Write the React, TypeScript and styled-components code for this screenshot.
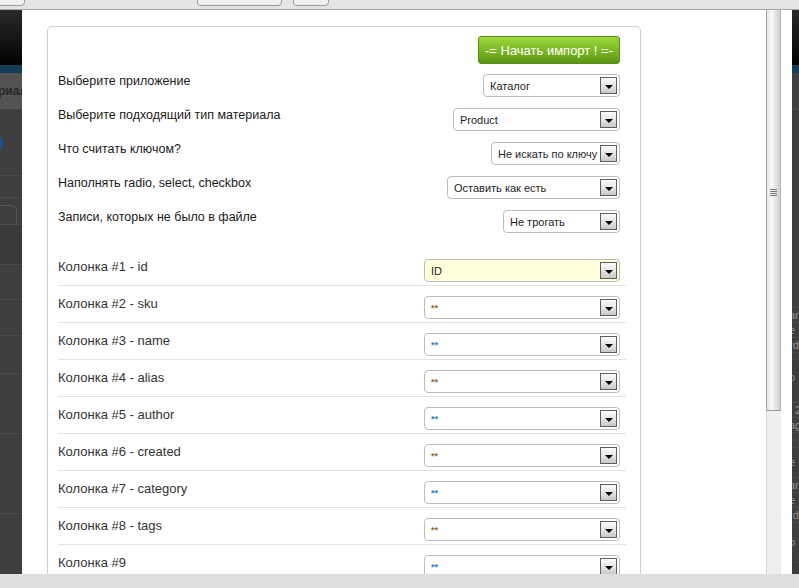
import React from 'react'
import styled, { createGlobalStyle } from 'styled-components'

const GlobalStyle = createGlobalStyle`
    html, body {
        margin: 0;
        padding: 0;
        overflow: hidden;
    }
    body {
        font-family: 'Liberation Sans', Arial, sans-serif;
    }
`

const Page = styled.div`
    width: 799px;
    height: 588px;
    display: flex;
    flex-direction: column;
    background: #dedede;
    overflow: hidden;
`

const TopBar = styled.div`
    height: 9px;
    flex: none;
    display: flex;
    align-items: flex-end;
    overflow: hidden;
    background: #e4e4e4;
    border-bottom: 1px solid #a9a9a9;
`

const TopButton = styled.div<{ $gap: number; $width: number }>`
    flex: none;
    margin-left: ${({ $gap }) => $gap}px;
    margin-bottom: 3px;
    width: ${({ $width }) => $width}px;
    height: 16px;
    box-sizing: border-box;
    border: 1px solid #9c9c9c;
    border-radius: 4px;
    background: linear-gradient(#fdfdfd, #ededed);
`

const Middle = styled.div`
    height: 564px;
    flex: none;
    display: flex;
`

const Backdrop = styled.div<{ $width?: number }>`
    width: ${({ $width }) => ($width ? `${$width}px` : 'auto')};
    flex: ${({ $width }) => ($width ? 'none' : '1')};
    display: flex;
    flex-direction: column;
    overflow: hidden;
    background: #3d3d3d;
`

const BackdropHeader = styled.div`
    height: 55px;
    flex: none;
    background: linear-gradient(#2a2a2a, #020202);
`

const BackdropStripe = styled.div`
    height: 8px;
    flex: none;
    background: #123c58;
`

const BackdropNav = styled.div`
    height: 36px;
    flex: none;
    display: flex;
    align-items: center;
    justify-content: flex-end;
    white-space: nowrap;
    background: #535353;
    border-bottom: 1px solid #464646;
    color: #262626;
    font-size: 12px;
    font-weight: bold;
`

const NavText = styled.span`
    margin-right: -5px;
`

const BackdropRow = styled.div<{ $height: number; $shade?: string }>`
    height: ${({ $height }) => $height}px;
    flex: none;
    display: flex;
    align-items: center;
    box-sizing: border-box;
    background: ${({ $shade }) => $shade || '#3e3e3e'};
    border-bottom: 1px solid #4b4b4b;
    color: #8f959a;
    font-size: 11px;
    white-space: nowrap;
`

const BlueDot = styled.span`
    width: 12px;
    height: 12px;
    margin-left: -8px;
    border-radius: 50%;
    background: #1d4f8c;
`

const Tab = styled.span`
    width: 16px;
    height: 26px;
    margin-top: 14px;
    border: 1px solid #555;
    border-left: none;
    border-bottom: none;
    border-radius: 0 6px 0 0;
`

const FragmentText = styled.span`
    margin-left: -3px;
    line-height: 15px;
`

const Modal = styled.div`
    width: 770px;
    flex: none;
    display: flex;
    background: #fff;
`

const ModalBody = styled.div`
    width: 744px;
    flex: none;
    overflow: hidden;
    box-sizing: border-box;
    padding: 16px 0 0 25px;
`

const Panel = styled.div`
    width: 594px;
    min-height: 700px;
    box-sizing: border-box;
    padding: 9px 14px 0 10px;
    border: 1px solid #cecece;
    border-radius: 5px 5px 0 0;
`

const ActionBar = styled.div`
    display: flex;
    justify-content: flex-end;
    padding-right: 6px;
    margin-bottom: 10px;
`

const StartButton = styled.button`
    width: 142px;
    height: 28px;
    box-sizing: border-box;
    padding: 0;
    border: 1px solid #5b8c17;
    border-radius: 3px;
    background: linear-gradient(#9fd93d, #79b622 55%, #5d9412);
    color: #fff;
    font-family: 'Liberation Sans', Arial, sans-serif;
    font-size: 13px;
    cursor: pointer;
`

const SettingRow = styled.div`
    height: 34px;
    display: flex;
    align-items: flex-start;
    padding-right: 6px;
`

const SettingLabel = styled.div`
    font-size: 12.5px;
    line-height: 15px;
    color: #1a1a1a;
`

const ColumnList = styled.div`
    margin-top: 5px;
`

const ColumnRow = styled.div`
    height: 37px;
    box-sizing: border-box;
    display: flex;
    align-items: flex-start;
    padding: 10px 6px 3px 0;
    border-bottom: 1px solid #e3e3e3;
`

const ColumnLabel = styled.div`
    font-size: 13px;
    line-height: 16px;
    color: #333;
`

const SelectBox = styled.div<{ $width: number; $highlight?: boolean }>`
    width: ${({ $width }) => $width}px;
    height: 23px;
    flex: none;
    margin-left: auto;
    box-sizing: border-box;
    display: flex;
    align-items: center;
    padding-left: 6px;
    border: 1px solid #bcbcbc;
    border-radius: 4px;
    background: ${({ $highlight }) => ($highlight ? '#ffffdc' : '#fff')};
    font-size: 11px;
    color: #1e1e1e;
    white-space: nowrap;
`

const SelectValue = styled.span<{ $tone?: string }>`
    color: ${({ $tone }) => $tone || '#1e1e1e'};
    font-weight: ${({ $tone }) => ($tone ? 'bold' : 'normal')};
    font-size: ${({ $tone }) => ($tone ? '9px' : '11px')};
`

const ArrowBox = styled.span`
    width: 17px;
    height: 17px;
    flex: none;
    margin-left: auto;
    margin-right: 2px;
    box-sizing: border-box;
    display: flex;
    align-items: center;
    justify-content: center;
    border: 1px solid #5e5e5e;
    background: linear-gradient(#fbfbfb, #e6e6e6 50%, #c9c9c9);
`

const ArrowTip = styled.span`
    margin-top: 2px;
    border-left: 4px solid transparent;
    border-right: 4px solid transparent;
    border-top: 4px solid #000;
`

const Scrollbar = styled.div`
    width: 15px;
    flex: none;
    display: flex;
    flex-direction: column;
`

const Thumb = styled.div`
    height: 401px;
    flex: none;
    box-sizing: border-box;
    display: flex;
    flex-direction: column;
    align-items: center;
    padding-top: 179px;
    border-left: 1px solid #a3a3a3;
    border-right: 1px solid #b7b7b7;
    border-bottom: 1px solid #9a9a9a;
    background: linear-gradient(to right, #e6e6e6, #f8f8f8 35%, #e2e2e2 70%, #cfcfcf);
`

const GripLine = styled.span`
    width: 7px;
    height: 1px;
    margin-bottom: 1px;
    background: #7a7a7a;
`

const Track = styled.div`
    flex: 1;
    background: #eeeeee;
    border-left: 1px solid #dadada;
`

const Gutter = styled.div`
    width: 11px;
    flex: none;
`

const BottomBar = styled.div`
    flex: 1;
    background: #dedede;
`

type SelectProps = {
    width: number
    value: string
    tone?: string
    highlight?: boolean
}

function FakeSelect({ width, value, tone, highlight }: SelectProps) {
    return (
        <SelectBox $width={width} $highlight={highlight}>
            <SelectValue $tone={tone}>{value}</SelectValue>
            <ArrowBox>
                <ArrowTip />
            </ArrowBox>
        </SelectBox>
    )
}

const settings = [
    { label: 'Выберите приложение', value: 'Каталог', width: 137 },
    { label: 'Выберите подходящий тип материала', value: 'Product', width: 167 },
    { label: 'Что считать ключом?', value: 'Не искать по ключу', width: 129 },
    { label: 'Наполнять radio, select, checkbox', value: 'Оставить как есть', width: 173 },
    { label: 'Записи, которых не было в файле', value: 'Не трогать', width: 117 },
]

const columns = ['id', 'sku', 'name', 'alias', 'author', 'created', 'category', 'tags', '']

const leftRows = [
    { height: 66, content: <BlueDot /> },
    { height: 22 },
    { height: 27, content: <Tab /> },
    { height: 40, shade: '#3a3a3a' },
    { height: 35 },
    { height: 36 },
    { height: 38 },
    { height: 60 },
    { height: 80 },
    { height: 80 },
]

const rightRows = [
    { height: 37, shade: '#404040' },
    { height: 198 },
    { height: 15, text: 'ar' },
    { height: 15, text: 'e' },
    { height: 15, text: 'rd' },
    { height: 50, text: 'o' },
    { height: 15, text: ': 2' },
    { height: 15, text: 'ag' },
    { height: 15, text: '|' },
    { height: 30, text: 'e 1' },
    { height: 15, text: 'ar' },
    { height: 15, text: 'e' },
    { height: 15, text: 'rd' },
    { height: 40, text: 'o' },
]

export default function App() {
    return (
        <Page>
            <GlobalStyle />
            <TopBar>
                <TopButton $gap={-5} $width={30} />
                <TopButton $gap={172} $width={85} />
                <TopButton $gap={11} $width={36} />
            </TopBar>
            <Middle>
                <Backdrop $width={22}>
                    <BackdropHeader />
                    <BackdropStripe />
                    <BackdropNav>
                        <NavText>материал</NavText>
                    </BackdropNav>
                    {leftRows.map((row, i) => (
                        <BackdropRow key={i} $height={row.height} $shade={row.shade}>
                            {row.content}
                        </BackdropRow>
                    ))}
                </Backdrop>
                <Modal>
                    <ModalBody>
                        <Panel>
                            <ActionBar>
                                <StartButton>-= Начать импорт ! =-</StartButton>
                            </ActionBar>
                            {settings.map((s) => (
                                <SettingRow key={s.label}>
                                    <SettingLabel>{s.label}</SettingLabel>
                                    <FakeSelect width={s.width} value={s.value} />
                                </SettingRow>
                            ))}
                            <ColumnList>
                                {columns.map((name, i) => (
                                    <ColumnRow key={i}>
                                        <ColumnLabel>
                                            Колонка #{i + 1}
                                            {name ? ` - ${name}` : ''}
                                        </ColumnLabel>
                                        {i === 0 ? (
                                            <FakeSelect width={196} value="ID" highlight />
                                        ) : (
                                            <FakeSelect
                                                width={196}
                                                value="**"
                                                tone={i % 2 === 1 ? '#a06a2a' : '#2f7bd0'}
                                            />
                                        )}
                                    </ColumnRow>
                                ))}
                            </ColumnList>
                        </Panel>
                    </ModalBody>
                    <Scrollbar>
                        <Thumb>
                            <GripLine />
                            <GripLine />
                            <GripLine />
                            <GripLine />
                        </Thumb>
                        <Track />
                    </Scrollbar>
                    <Gutter />
                </Modal>
                <Backdrop>
                    <BackdropHeader />
                    <BackdropStripe />
                    {rightRows.map((row, i) => (
                        <BackdropRow key={i} $height={row.height} $shade={row.shade}>
                            {row.text && <FragmentText>{row.text}</FragmentText>}
                        </BackdropRow>
                    ))}
                </Backdrop>
            </Middle>
            <BottomBar />
        </Page>
    )
}
